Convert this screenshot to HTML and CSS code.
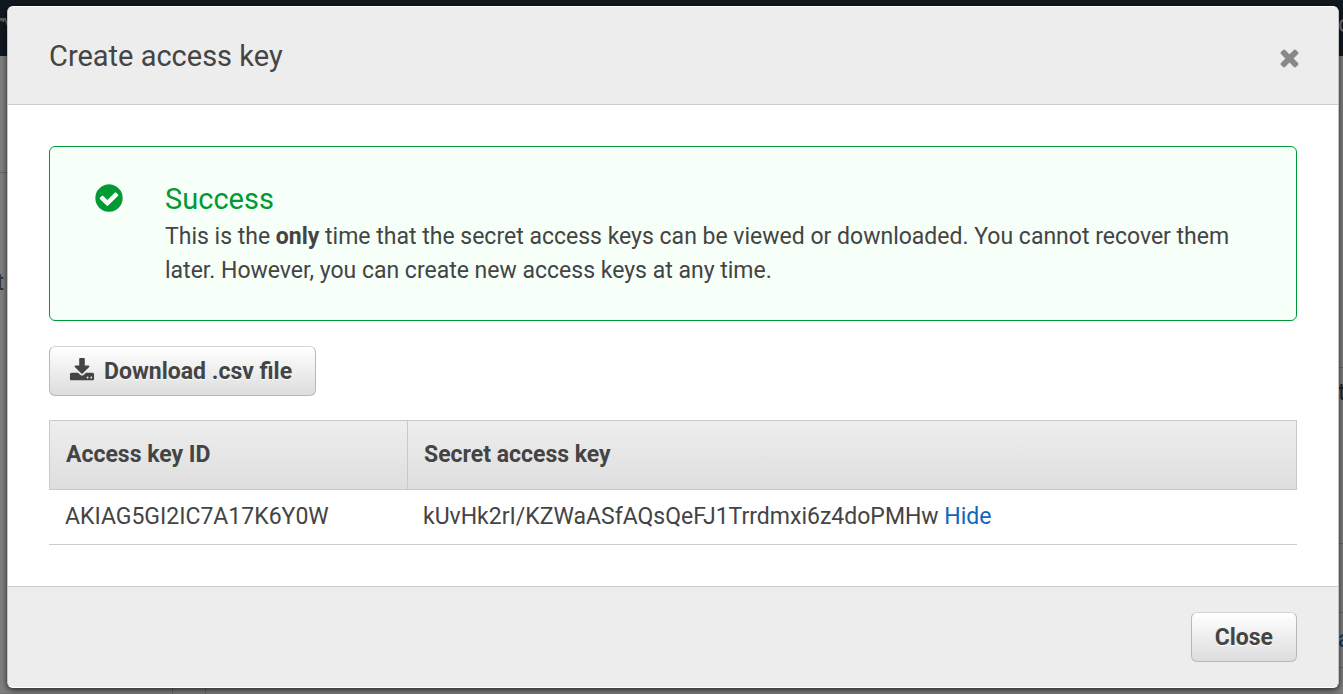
FILE: index.html
```html
<!DOCTYPE html>
<html lang="en">
<head>
  <meta charset="UTF-8" />
  <meta name="viewport" content="width=device-width, initial-scale=1.0" />
  <title>Create access key</title>
  <link rel="stylesheet" href="styles.css">
</head>
<body>
  <!-- dimmed console page behind the dialog -->
  <div class="page" aria-hidden="true">
    <div class="topnav">
      <svg class="logo" width="7" height="12" viewBox="0 0 7 12"><path d="M0 3h4l-1 3M5 2l3 9" fill="none" stroke="#6d7378" stroke-width="1.5"/><path d="M0 5l3-1" stroke="#7c5322"/></svg>
      <span class="nav-item">o</span>
    </div>
    <div class="columns">
      <div class="side">
        <div class="side-head"></div>
        <div class="side-text">t</div>
      </div>
      <div class="rail">
        <div class="rail-top"></div>
        <div class="rail-text">t</div>
        <div class="rail-gap"></div>
        <div class="rail-link">a</div>
      </div>
    </div>
    <div class="page-foot"><div class="foot-cell"></div></div>
  </div>

  <div class="modal" role="dialog" aria-labelledby="modal-title">
    <div class="modal-header">
      <h1 id="modal-title">Create access key</h1>
      <button class="dismiss" aria-label="Dismiss">
        <svg width="27" height="27" viewBox="0 0 1792 1792"><path fill="currentColor" d="M1490 1322q0 40-28 68l-136 136q-28 28-68 28t-68-28l-294-294-294 294q-28 28-68 28t-68-28l-136-136q-28-28-28-68t28-68l294-294-294-294q-28-28-28-68t28-68l136-136q28-28 68-28t68 28l294 294 294-294q28-28 68-28t68 28l136 136q28 28 28 68t-28 68l-294 294 294 294q28 28 28 68z"/></svg>
      </button>
    </div>

    <div class="modal-body">
      <div class="alert">
        <svg class="alert-icon" width="32" height="32" viewBox="0 0 1792 1792"><path fill="currentColor" d="M1412 734q0-28-18-46l-91-90q-19-19-45-19t-45 19l-408 407-226-226q-19-19-45-19t-45 19l-91 90q-18 18-18 46 0 27 18 45l362 362q19 19 45 19 27 0 46-19l543-543q18-18 18-45zm252 162q0 209-103 385.5t-279.5 279.5-385.5 103-385.5-103-279.5-279.5-103-385.5 103-385.5 279.5-279.5 385.5-103 385.5 103 279.5 279.5 103 385.5z"/></svg>
        <div class="alert-text">
          <h2>Success</h2>
          <p>This is the <b>only</b> time that the secret access keys can be viewed or downloaded. You cannot recover them later. However, you can create new access keys at any time.</p>
        </div>
      </div>

      <button class="btn btn-download">
        <svg width="26" height="26" viewBox="0 0 1792 1792"><path fill="currentColor" d="M1344 1344q0-26-19-45t-45-19-45 19-19 45 19 45 45 19 45-19 19-45zm256 0q0-26-19-45t-45-19-45 19-19 45 19 45 45 19 45-19 19-45zm128-224v320q0 40-28 68t-68 28h-1472q-40 0-68-28t-28-68v-320q0-40 28-68t68-28h465l135 136q58 56 136 56t136-56l136-136h464q40 0 68 28t28 68zm-325-569q17 41-14 70l-448 448q-18 19-45 19t-45-19l-448-448q-31-29-14-70 17-39 59-39h256v-448q0-26 19-45t45-19h256q26 0 45 19t19 45v448h256q42 0 59 39z"/></svg>
        Download .csv file
      </button>

      <table class="keys">
        <thead>
          <tr>
            <th class="col-id">Access key ID</th>
            <th>Secret access key</th>
          </tr>
        </thead>
        <tbody>
          <tr>
            <td>AKIAG5GI2IC7A17K6Y0W</td>
            <td>kUvHk2rI/KZWaASfAQsQeFJ1Trrdmxi6z4doPMHw <a href="#">Hide</a></td>
          </tr>
        </tbody>
      </table>
    </div>

    <div class="modal-footer">
      <button class="btn">Close</button>
    </div>
  </div>
</body>
</html>
```
FILE: styles.css
```css
* { box-sizing: border-box; }
body {
  margin: 0;
  padding: 6px 4px 6px 7px;
  font-family: Roboto, "Liberation Sans", sans-serif;
  font-size: 23px;
  line-height: 34px;
  color: #444;
  background: #7f7f7f;
  overflow: hidden;
}

/* page behind the dialog */
.page {
  position: absolute;
  inset: 0;
  display: flex;
  flex-direction: column;
  overflow: hidden;
  background: #7f7f7f;
}
.topnav {
  flex: none;
  display: flex;
  justify-content: space-between;
  height: 56px;
  padding-top: 8px;
  background: #111820;
}
.logo {
  margin-top: 8px;
}
.nav-item {
  width: 5px;
  color: #777;
}
.columns {
  flex: 1;
  display: flex;
  justify-content: space-between;
}
.side {
  display: flex;
  flex-direction: column;
  align-items: flex-end;
  width: 7px;
}
.side-head {
  width: 7px;
  height: 117px;
  border-bottom: 1px solid #686868;
}
.side-text {
  margin: 93px 3px 0 0;
  color: #333;
}
.rail {
  width: 5px;
  overflow: hidden;
}
.rail-top {
  height: 312px;
  border-bottom: 1px solid #686868;
}
.rail-text {
  margin-top: 8px;
  color: #222;
}
.rail-gap {
  height: 134px;
  border-bottom: 1px solid #686868;
}
.rail-link {
  height: 56px;
  margin-top: 68px;
  padding-top: 10px;
  border: solid #686868;
  border-width: 1px 0;
  color: #0b3a66;
}
.page-foot {
  height: 6px;
  border-bottom: 1px solid #777;
}
.foot-cell {
  width: 34px;
  height: 6px;
  margin-left: 172px;
  border: solid #686868;
  border-width: 0 1px;
}

/* dialog */
.modal {
  position: relative;
  border: 1px solid #c4c4c4;
  border-top-color: #fff;
  border-bottom-color: #fff;
  border-radius: 6px;
  overflow: hidden;
  background: #fff;
  box-shadow: 0 2px 6px rgba(0, 0, 0, 0.7);
}
.modal-header {
  display: flex;
  justify-content: space-between;
  align-items: center;
  height: 98px;
  padding: 0 35px 0 41px;
  background: #ededed;
  border-bottom: 1px solid #ccc;
}
h1, h2 {
  margin: 0;
  font-size: 29px;
  font-weight: 400;
  line-height: 34px;
}
.dismiss {
  display: flex;
  margin-top: 4px;
  padding: 0;
  border: 0;
  background: none;
  color: #888;
  cursor: pointer;
}
.modal-body {
  padding: 41px;
}
.alert {
  display: flex;
  gap: 40px;
  margin-bottom: 25px;
  padding: 35px 43px 32px;
  border: 1px solid #093;
  border-radius: 6px;
  background: #f6fff8;
}
.alert-icon {
  flex: none;
  color: #093;
}
.alert h2 {
  margin-bottom: 4px;
  color: #093;
}
.alert p {
  margin: 0;
}
.btn {
  display: flex;
  align-items: center;
  gap: 9px;
  height: 50px;
  padding: 0 23px;
  border: 1px solid #b8b8b8;
  border-top-color: #d4d4d4;
  border-radius: 6px;
  background: linear-gradient(#fff, #ddd);
  color: #444;
  font: bold 23px Roboto, "Liberation Sans", sans-serif;
  text-shadow: 0 1px 0 #fff;
  cursor: pointer;
}
.btn-download {
  margin-bottom: 24px;
  padding-left: 19px;
}
.keys {
  width: 100%;
  border-spacing: 0;
  table-layout: fixed;
}
.keys th,
.keys td {
  padding: 0 16px;
  text-align: left;
}
.keys th {
  height: 70px;
  border: solid #c9c9c9;
  border-width: 1px 0 1px 1px;
  background: linear-gradient(#eee, #dedede);
}
.keys th:last-child {
  border-right-width: 1px;
}
.keys td {
  height: 55px;
  border-bottom: 1px solid #ccc;
}
.col-id {
  width: 358px;
}
a {
  color: #1166bb;
  text-decoration: none;
}
.modal-footer {
  display: flex;
  justify-content: flex-end;
  padding: 25px 41px;
  background: #ededed;
  border-top: 1px solid #ccc;
}
```
